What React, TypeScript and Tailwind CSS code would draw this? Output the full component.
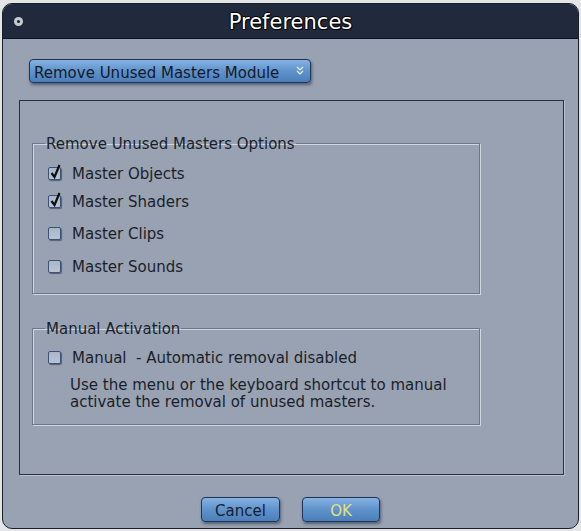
import React from "react";

const font = { fontFamily: '"DejaVu Sans", Verdana, sans-serif' };

function Check({ checked }: { checked: boolean }) {
  return (
    <span className="relative inline-block w-[13px] h-[13px] shrink-0 rounded-[2px] border border-[#3a5275] bg-gradient-to-b from-[#aab6c8] to-[#b9c3d2] shadow-[1px_1px_1px_rgba(20,30,50,0.5)]">
      {checked && (
        <svg
          className="absolute left-[1px] top-[-4px]"
          width="12"
          height="16"
          viewBox="0 0 12 16"
        >
          <path d="M1.5 9 L4.5 13 L9.5 1" fill="none" stroke="#0d0d12" strokeWidth="2.2" />
        </svg>
      )}
    </span>
  );
}

function Row({ checked, label, className }: { checked: boolean; label: string; className?: string }) {
  return (
    <div className={"flex items-center h-[20px] " + (className ?? "")}>
      <Check checked={checked} />
      <span className="ml-[11px] whitespace-pre relative top-[1px]">{label}</span>
    </div>
  );
}

export default function App() {
  return (
    <div className="w-[581px] h-[531px] bg-[#e4e5e7] pt-[3px] pl-[2px] text-[15px] leading-[18px] text-[#1b1f29]" style={font}>
      <div className="w-[577px] h-[526px] rounded-[10px] border border-[#1a1f2a] bg-[#98a2b3] overflow-hidden flex flex-col">
        {/* Title bar */}
        <div className="relative h-[35px] shrink-0 bg-[#212a3d] border-b border-[#0e121a] flex items-center justify-center">
          <span className="absolute left-[11px] top-[13px] w-[9px] h-[9px] rounded-full bg-[#c5c9d0] flex items-center justify-center">
            <span className="w-[3px] h-[3px] rounded-full bg-[#1a2030]" />
          </span>
          <span
            className="text-[21px] leading-[24px] text-white relative top-[1px]"
            style={{
              textShadow:
                "1px 0 0 #000, -1px 0 0 #000, 0 1px 0 #000, 0 -1px 0 #000, 1px 1px 1px #000",
            }}
          >
            Preferences
          </span>
        </div>

        {/* Body */}
        <div className="flex flex-col pl-[16px] pt-[20px]">
          <div className="ml-[10px] w-[282px] h-[24px] rounded-[4px] border border-[#1f355a] bg-gradient-to-b from-[#86b2e0] via-[#5f93cc] to-[#4c7fba] shadow-[1px_2px_3px_rgba(20,30,50,0.5)] flex items-center pl-[4px] pr-[6px]">
            <span className="flex-1 text-[#141a28] relative top-[2px]">Remove Unused Masters Module</span>
            <svg width="8" height="10" viewBox="0 0 8 10">
              <path d="M1 1 L4 4 L7 1 M1 5 L4 8 L7 5" fill="none" stroke="#e6eef8" strokeWidth="1.2" />
            </svg>
          </div>

          {/* Inner panel */}
          <div className="mt-[17px] w-[545px] h-[375px] border border-[#2b303c] shadow-[1px_1px_0_#b8c0cc] flex flex-col pl-[12px]">
            <fieldset className="mt-[33px] w-[448px] border border-[#6d7788] shadow-[1px_1px_0_#cfd6e1,inset_1px_1px_0_#cfd6e1] px-[15px] pb-[17px]">
              <legend className="-ml-[3px] px-[1px] leading-[18px] pt-[1px]">Remove Unused Masters Options</legend>
              <Row className="mt-[10px]" checked label="Master Objects" />
              <Row className="mt-[8px]" checked label="Master Shaders" />
              <Row className="mt-[12px]" checked={false} label="Master Clips" />
              <Row className="mt-[13px]" checked={false} label="Master Sounds" />
            </fieldset>

            <fieldset className="mt-[25px] w-[448px] border border-[#6d7788] shadow-[1px_1px_0_#cfd6e1,inset_1px_1px_0_#cfd6e1] px-[15px] pb-[13px]">
              <legend className="-ml-[3px] px-[1px] leading-[18px] pt-[1px]">Manual Activation</legend>
              <Row className="mt-[9px]" checked={false} label="Manual  - Automatic removal disabled" />
              <div className="mt-[10px] pl-[22px] leading-[17px]">
                Use the menu or the keyboard shortcut to manual
                <br />
                activate the removal of unused masters.
              </div>
            </fieldset>
          </div>

          {/* Buttons */}
          <div className="mt-[22px] flex pl-[182px] gap-[22px]">
            <button className="w-[79px] h-[25px] rounded-[4px] border border-[#1f355a] bg-gradient-to-b from-[#86b2e0] via-[#5f93cc] to-[#4c7fba] shadow-[1px_2px_3px_rgba(20,30,50,0.5)] text-[#182030] leading-[18px] pt-[2px]">
              Cancel
            </button>
            <button className="w-[78px] h-[25px] rounded-[4px] border border-[#1f355a] bg-gradient-to-b from-[#86b2e0] via-[#5f93cc] to-[#4c7fba] shadow-[1px_2px_3px_rgba(20,30,50,0.5)] text-[#e3e27a] leading-[18px] pt-[2px]">
              OK
            </button>
          </div>
        </div>
      </div>
    </div>
  );
}
